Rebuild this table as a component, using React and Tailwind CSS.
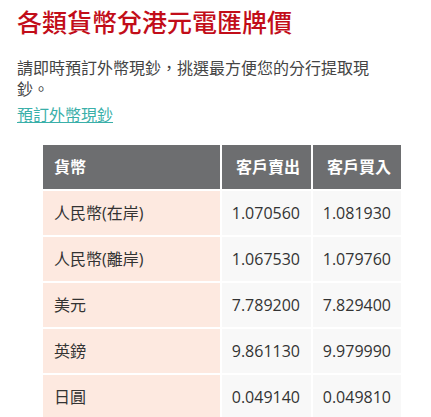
const rows = [
  { name: '人民幣(在岸)', sell: '1.070560', buy: '1.081930' },
  { name: '人民幣(離岸)', sell: '1.067530', buy: '1.079760' },
  { name: '美元', sell: '7.789200', buy: '7.829400' },
  { name: '英鎊', sell: '9.861130', buy: '9.979990' },
  { name: '日圓', sell: '0.049140', buy: '0.049810' },
]

export default function App() {
  return (
    <div className="min-h-screen bg-white pl-[17px] pt-[6px] font-['Open_Sans','Noto_Sans_CJK_TC',sans-serif] text-[#333]">
      {/* Title */}
      <h1 className="text-[25px] leading-[30px] font-medium text-[#c20d19] font-['Noto_Sans_CJK_TC',sans-serif]">
        各類貨幣兌港元電匯牌價
      </h1>

      {/* Intro */}
      <p className="mt-[21px] w-[360px] text-[16px] leading-[21px] text-[#444] font-['Noto_Sans_CJK_TC',sans-serif]">
        請即時預訂外幣現鈔，挑選最方便您的分行提取現鈔。
      </p>
      <a href="#" className="mt-[5px] block w-fit text-[16px] leading-[21px] text-[#3aafa9] underline font-['Noto_Sans_CJK_TC',sans-serif]">
        預訂外幣現鈔
      </a>

      {/* Rates table */}
      <table className="mt-[18px] ml-[24px] border-separate border-spacing-[2px] text-[16px]">
        <thead>
          <tr className="h-[44px] bg-[#6d6e70] text-white">
            <th className="w-[177px] pl-[11px] text-left font-bold">貨幣</th>
            <th className="w-[89px] pr-[11px] text-right font-bold">客戶賣出</th>
            <th className="w-[88px] pr-[10px] text-right font-bold">客戶買入</th>
          </tr>
        </thead>
        <tbody>
          {rows.map((r) => (
            <tr key={r.name} className="h-[44px]">
              <td className="bg-[#fde9e0] pl-[11px]">{r.name}</td>
              <td className="bg-[#f8f8f8] pr-[11px] text-right">{r.sell}</td>
              <td className="bg-[#f8f8f8] pr-[10px] text-right">{r.buy}</td>
            </tr>
          ))}
        </tbody>
      </table>
    </div>
  )
}
